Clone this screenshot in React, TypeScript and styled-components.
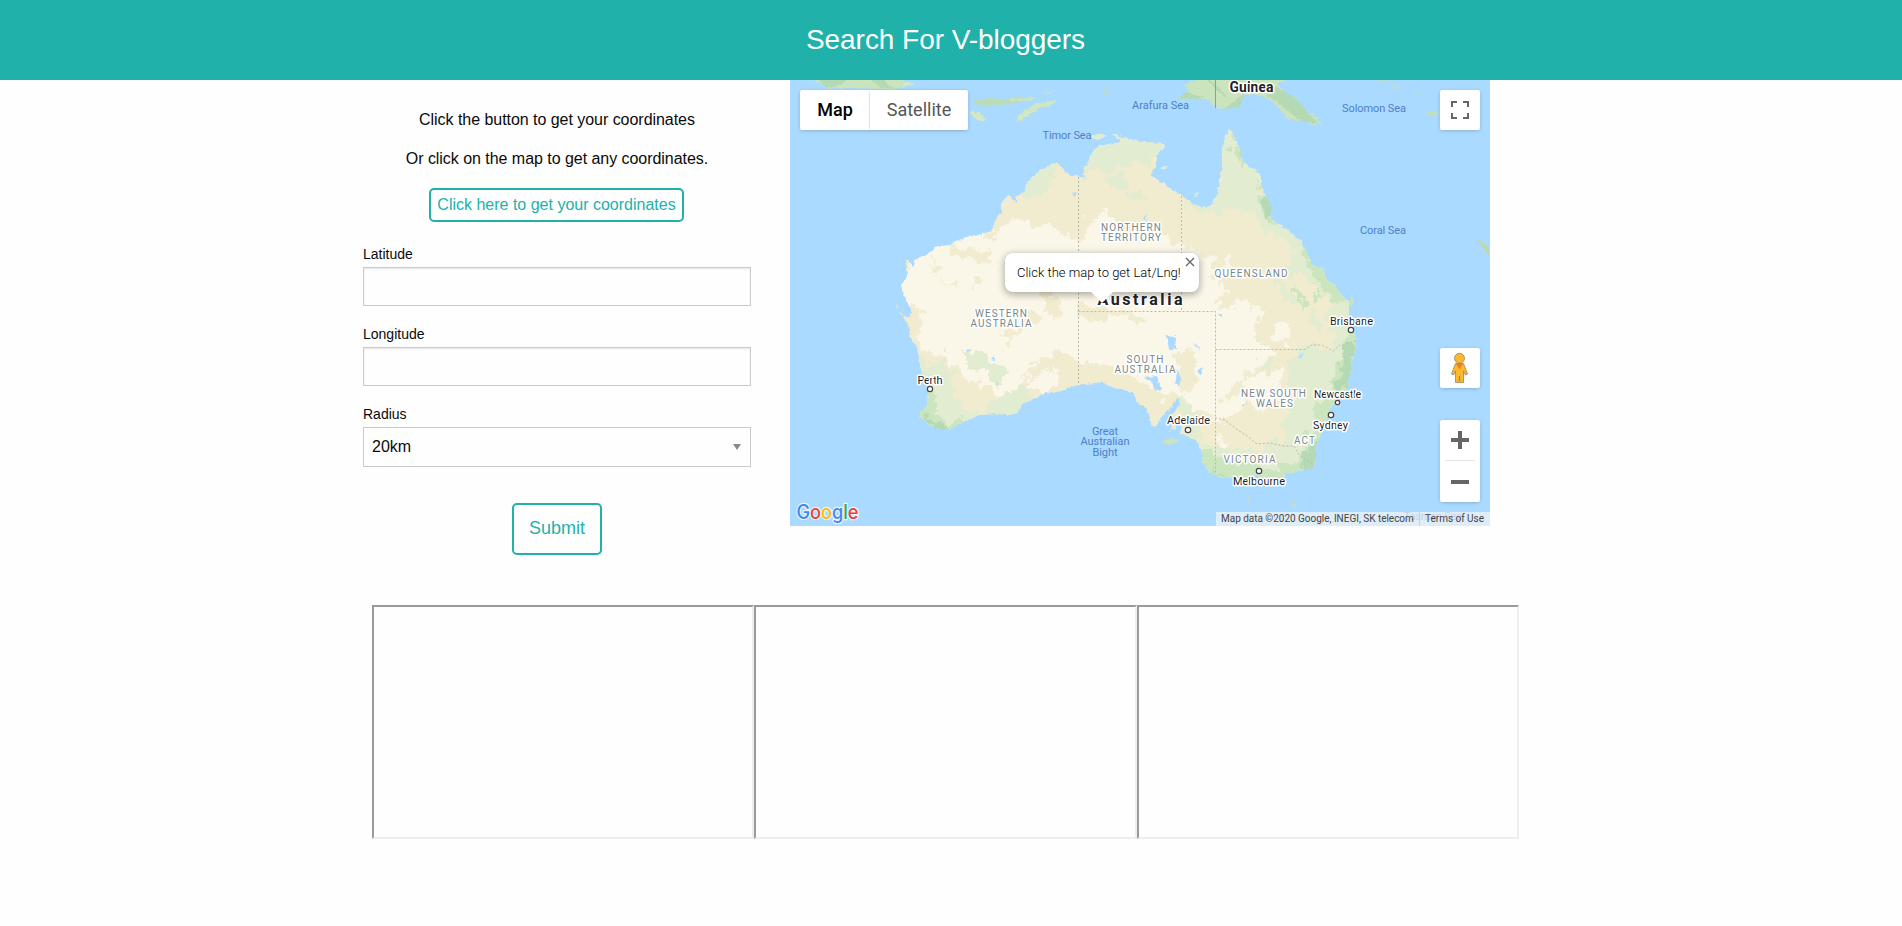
import React from "react";
import styled, { createGlobalStyle } from "styled-components";

const TEAL = "#20b2aa";

const GlobalStyle = createGlobalStyle`
  *, *::before, *::after { box-sizing: border-box; }
  body {
    margin: 0;
    background: #fefefe;
    color: #0a0a0a;
    font-family: "Liberation Sans", Arial, sans-serif;
    font-size: 16px;
  }
`;

const Header = styled.header`
  height: 80px;
  display: flex;
  align-items: center;
  justify-content: center;
  padding: 0 11px 2px 0;
  background: ${TEAL};
`;

const Title = styled.h1`
  margin: 0;
  color: #fefefe;
  font-size: 28px;
  font-weight: 400;
  line-height: 39px;
  letter-spacing: -0.05px;
  white-space: nowrap;
`;

const Main = styled.main`
  display: grid;
  grid-template-columns: 388px 700px;
  column-gap: 39px;
  align-items: start;
  padding-left: 363px;
`;

const Form = styled.form`
  display: flex;
  flex-direction: column;
  align-items: center;
  padding-top: 27px;
`;

const Hint = styled.p`
  margin: 0 0 13px;
  line-height: 26px;
  letter-spacing: -0.04px;
  white-space: nowrap;
`;

const OutlineButton = styled.button<{ $large?: boolean }>`
  width: ${(p) => (p.$large ? 90 : 255)}px;
  height: ${(p) => (p.$large ? 52 : 34)}px;
  margin-top: ${(p) => (p.$large ? 36 : 3)}px;
  margin-right: ${(p) => (p.$large ? 0 : 1)}px;
  padding: 0 0 1px;
  border: 2px solid ${TEAL};
  border-radius: 5px;
  background: #fefefe;
  color: ${TEAL};
  font: 400 ${(p) => (p.$large ? 18 : 16)}px "Liberation Sans", Arial, sans-serif;
  white-space: nowrap;
`;

const Fields = styled.div`
  width: 100%;
  display: grid;
  row-gap: 15px;
  margin-top: 20px;
`;

const Field = styled.label`
  display: flex;
  flex-direction: column;
  height: 65px;
  font-size: 14px;
  line-height: 25px;
`;

const Input = styled.input`
  width: 100%;
  height: 39px;
  padding: 8px;
  border: 1px solid #cacaca;
  border-radius: 0;
  background: #fefefe;
  box-shadow: inset 0 1px 2px rgba(10, 10, 10, 0.1);
  font: inherit;
`;

const Select = styled.div`
  height: 40px;
  flex: none;
  display: flex;
  align-items: center;
  justify-content: space-between;
  padding: 0 9px 2px 8px;
  border: 1px solid #cacaca;
  font-size: 16px;
`;

const Caret = styled.span`
  margin-top: 2px;
  border: 4px solid transparent;
  border-top: 6px solid #8a8a8a;
  border-bottom: 0;
`;

const MapPanel = styled.section`
  position: relative;
  width: 700px;
  height: 446px;
  overflow: hidden;
  background: #aadaff;
  font-family: Roboto, sans-serif;
`;

const MapSvg = styled.svg`
  display: block;
  width: 700px;
  height: 446px;
`;

const Control = styled.div<{ $top: number; $height?: number }>`
  position: absolute;
  right: 10px;
  top: ${(p) => p.$top}px;
  width: 40px;
  height: ${(p) => p.$height ?? 40}px;
  border-radius: 2px;
  background: #fff;
  box-shadow: 0 1px 4px -1px rgba(0, 0, 0, 0.3);
`;

const MapTypes = styled.div`
  position: absolute;
  left: 10px;
  top: 10px;
  display: flex;
  height: 40px;
  border-radius: 2px;
  background: #fff;
  box-shadow: 0 1px 4px -1px rgba(0, 0, 0, 0.3);
`;

const MapType = styled.span<{ $active?: boolean }>`
  width: ${(p) => (p.$active ? 70 : 98)}px;
  line-height: 40px;
  text-align: center;
  font-size: 18px;
  font-weight: ${(p) => (p.$active ? 500 : 400)};
  color: ${(p) => (p.$active ? "#000" : "#565656")};
  & + & { box-shadow: -1px 0 2px -1px rgba(0, 0, 0, 0.3); }
`;

const Bubble = styled.div`
  position: absolute;
  left: 215px;
  top: 173px;
  width: 194px;
  height: 39px;
  padding-left: 12px;
  border-radius: 8px;
  background: #fff;
  box-shadow: 0 2px 7px 1px rgba(0, 0, 0, 0.3);
  font-size: 13px;
  font-weight: 300;
  line-height: 40px;
  color: #000;
  white-space: nowrap;
  &::after {
    content: "";
    position: absolute;
    left: 85px;
    top: 38px;
    border: 12px solid transparent;
    border-top-color: #fff;
    border-bottom: 0;
  }
`;

const CloseIcon = styled.svg`
  position: absolute;
  right: 4px;
  top: 4px;
`;

const Attribution = styled.div`
  position: absolute;
  right: 0;
  bottom: 0;
  width: 274px;
  height: 14px;
  display: flex;
  justify-content: space-between;
  padding: 0 6px 0 5px;
  background: rgba(245, 245, 245, 0.7);
  color: #444;
  font-size: 10px;
  letter-spacing: -0.02px;
  line-height: 14px;
  white-space: nowrap;
`;

const Divider = styled.i`
  width: 1px;
  background: #aadaff;
`;

const Frames = styled.section`
  display: grid;
  grid-template-columns: repeat(3, 1fr);
  width: 1147px;
  margin: 50px 0 0 372px;
`;

const Frame = styled.div`
  height: 234px;
  border: 2px solid;
  border-color: #9a9a9a #eee #eee #9a9a9a;
`;

const MAINLAND =
  "M1009 195L1002 205 1002 213 997 220 992 232 980 236 966 238 962 241 955 242 950 246 938 247 927 256 918 259 913 267 909 261 907 270 908 277 903 285 903 292 906 299 912 311 911 318 904 318 909 325 911 337 917 348 920 357 921 368 927 383 929 393 928 407 922 412 920 418 927 423 935 429 950 431 960 425 972 420 980 416 997 415 1010 416 1018 414 1023 405 1047 394 1062 392 1078 386 1103 383 1115 389 1123 390 1135 395 1138 403 1145 407 1150 415 1153 428 1157 427 1163 417 1173 407 1179 398 1181 405 1173 417 1171 424 1176 431 1179 420 1182 426 1181 434 1188 437 1197 442 1203 452 1203 463 1210 473 1223 479 1233 479 1246 485 1252 478 1259 475 1262 481 1270 485 1275 489 1278 482 1288 474 1300 472 1313 470 1317 463 1317 447 1322 435 1328 420 1332 408 1340 400 1347 392 1351 378 1353 363 1357 347 1356 333 1350 317 1350 303 1344 298 1337 288 1326 278 1325 270 1313 266 1308 253 1302 242 1290 232 1280 225 1272 220 1272 207 1267 198 1262 185 1262 175 1253 169 1243 163 1242 152 1235 137 1230 129 1227 137 1223 150 1223 170 1220 187 1214 205 1207 209 1197 206 1180 195 1165 185 1152 176 1157 167 1157 157 1167 147 1160 144 1147 143 1133 141 1120 137 1113 134 1122 143 1110 145 1100 147 1093 153 1087 167 1083 175 1087 179 1078 176 1070 178 1069 174 1057 164 1043 170 1033 178 1027 185 1025 193 1017 198 1017 205Z";

const SAND = [
  "M990 190L1030 155 1080 130 1170 125 1178 190 1230 115 1275 210 1330 270 1365 340 1340 420 1300 460 1245 470 1225 450 1216 425 1240 410 1248 400 1232 395 1225 404 1222 396 1240 380 1258 368 1278 355 1262 348 1255 328 1262 315 1252 306 1240 300 1222 312 1218 300 1228 290 1216 285 1226 268 1208 280 1216 262 1200 252 1176 246 1168 236 1152 238 1120 240 1112 220 1104 208 1098 220 1090 222 1084 238 1072 240 1060 230 1040 228 1030 222 1018 218 1006 228 995 236 984 238Z",
  "M952 240L970 252 990 248 994 264 970 262 948 257Z",
  "M932 256L944 272 934 268Z",
  "M930 276L948 282 958 286 946 284Z M972 278L986 276 980 290Z",
  "M903 312L914 304 925 314 922 330 914 336 923 350 950 362 965 380 990 385 1005 405 1020 395 1026 378 1034 366 1060 352 1074 354 1080 362 1120 370 1132 380 1150 380 1165 400 1178 395 1192 410 1218 422 1222 480 900 440 890 330Z",
  "M1078 308L1096 304 1110 312 1130 312 1147 322 1140 328 1124 316 1100 322 1080 318Z",
  "M1040 285L1052 290 1062 310 1056 322 1046 308Z M1005 325L1022 332 1014 346 1002 340Z M1030 310L1040 318 1034 330 1024 322Z",
  "M1176 350L1194 345 1192 362 1198 385 1184 396 1180 376Z",
];

const LIGHT = [
  "M1028 378L1060 368 1062 384 1040 392 1026 390Z",
  "M1272 325L1294 325 1292 340 1282 346 1272 336Z",
  "M1248 380L1282 370 1285 400 1270 412 1256 408 1245 398Z",
  "M1224 262L1236 256 1232 272 1222 268Z",
];

const GREEN = [
  "M1057 160L1060 172 1046 190 1028 200 1020 186 1030 165Z",
  "M1082 180L1092 172 1106 172 1118 164 1126 172 1140 160 1150 166 1165 150 1160 128 1100 128 1080 160Z",
  "M1110 174L1126 176 1130 186 1120 190 1112 192Z M1130 190L1148 198 1140 204 1132 202Z",
  "M1225 115L1255 160 1270 190 1285 215 1300 235 1296 246 1276 234 1262 236 1262 222 1250 210 1238 214 1232 204 1215 218 1208 208 1222 180Z",
  "M1182 198L1212 208 1208 216 1190 208Z",
  "M1275 222L1325 255 1365 335 1355 385 1325 430 1320 480 1260 490 1200 478 1195 442 1215 448 1238 452 1262 448 1280 442 1286 418 1302 400 1290 384 1288 366 1300 350 1312 346 1330 352 1336 338 1326 316 1334 304 1318 296 1310 280 1298 272 1292 284 1286 270 1298 256 1288 242Z",
  "M1260 362L1278 358 1276 370 1264 374Z M1278 280L1290 292 1306 300 1298 306 1284 300Z M1314 308L1322 314 1320 334 1312 322Z",
  "M918 355L930 366 946 362 954 378 956 400 966 412 985 412 996 400 1010 395 1022 384 1034 400 1015 425 950 445 910 425Z",
  "M960 350L982 352 998 364 1010 374 1002 386 986 374 970 372Z",
  "M1178 398L1190 402 1200 420 1206 440 1183 438Z",
];

const FOREST = [
  "M930 388L938 396 938 414 948 424 964 422 958 436 920 432 916 414Z",
  "M1234 134L1246 160 1243 170 1236 156Z",
  "M1258 185L1278 205 1278 226 1264 216Z",
  "M1298 236L1322 262 1334 280 1350 300 1340 308 1326 294 1316 280 1306 262Z",
  "M1292 284L1302 290 1310 302 1304 306 1296 296Z M1314 286L1322 296 1318 304Z",
  "M1362 330L1362 350 1356 385 1338 404 1334 384 1342 360 1348 338Z",
  "M1336 398L1330 425 1320 448 1322 474 1266 494 1258 474 1288 464 1306 456 1308 440 1316 420 1318 404Z",
  "M1198 446L1212 452 1228 460 1262 466 1268 478 1250 488 1206 480Z",
];

const DARK_FOREST = [
  "M1343 344L1356 348 1352 384 1338 392 1344 370Z",
  "M928 420L946 424 955 432 934 434Z",
  "M1306 455L1320 446 1320 472 1300 470Z",
  "M1262 188L1274 205 1272 222 1266 214Z",
  "M1242 146L1248 164 1243 162Z",
  "M1214 466L1222 476 1216 480Z",
];

const LAKES =
  "M1168 336L1176 337 1177 349 1170 351Z M1145 379L1157 377 1162 390 1156 392 1153 383Z M1177 368L1182 378 1180 388 1176 383Z M1198 372L1203 368 1202 377Z M1195 344l6 5-1 3z M967 351l6-1-4 4z M992 360l4-4 0 5z M997 388l2-8-1 10z M945 352l2-4-1 5z M1144 220l4-5-1 6z M1219 314l4 0-2 4z M1299 360l6-7-2 5z M1242 407l6-4-3 4z M1074 195l4-3-2 6z";

const ISLANDS: [string, string][] = [
  ["M811 80L905 80 907 86 895 91 862 89 826 89 822 84Z", "#cbe4bd"],
  ["M820 80L850 80 842 86 826 89Z M872 80L884 80 894 90 880 88Z", "#b5d9b3"],
  ["M905 83L917 84 905 88Z", "#d6e8c5"],
  ["M974 102L990 99 1006 101 1020 97 1026 102 1003 106 981 107Z", "#bbdcb5"],
  ["M968 112L982 114 986 121 978 121Z", "#d4e8c4"],
  ["M1016 125L1020 116 1036 105 1058 101 1053 106 1038 110 1028 118 1017 123Z", "#d0e7c1"],
  ["M1010 100L1038 98 1030 102 1012 102Z", "#cbe4bd"],
  ["M1043 94l11-2-3 3z", "#cbe4bd"],
  ["M1104 94l6-8-2 8-4 2z", "#c0dfb7"],
  ["M1178 100L1190 93 1186 86 1197 80 1290 80 1278 84 1289 97 1296 99 1303 109 1317 118 1323 125 1315 127 1307 122 1289 120 1271 100 1255 95 1245 96 1240 109 1219 110 1208 100 1190 100Z", "#cbe4bd"],
  ["M1178 100L1188 92 1194 96 1206 98 1200 100Z M1278 88L1296 99 1317 122 1322 126 1300 121 1284 108 1268 96Z M1208 80L1216 84 1228 98 1218 92Z M1236 102L1246 94 1240 109 1224 110Z", "#b5d9b3"],
  ["M1092 137L1102 134 1107 137 1100 141 1094 140Z", "#e2ecd0"],
  ["M1163 168l5-1-1 3-4 0z M1194 197l5-3-2 4z", "#e2ecd0"],
  ["M1378 81l10 3-4-3z M1390 82l12 7-6-1z M1413 91l15 9-7-3z M1397 98l9 2-5 0z M1427 112l12 3-1 3-10-3z", "#c2dfb9"],
  ["M1477 240L1484 243 1490 249 1490 256 1482 247Z", "#b9dab1"],
  ["M1164 443L1172 439 1181 441 1175 444 1166 445Z", "#cce4bd"],
  ["M1168 432L1178 429 1176 425 1171 432Z", "#e8ecd0"],
  ["M1293 500l5 9-3 0z M1247 500l3-2 0 6z", "#c5e1ba"],
  ["M897 305l3 5-2-1z M901 311l5 7-4-2z M907 262l3-2 1 12-3-4z", "#f1ebce"],
  ["M1353 296l2 6-3 6-2-3z", "#cbe4bd"],
];

type Label = {
  text: string;
  x: number;
  y: number;
  kind: "sea" | "state" | "city" | "country";
  w: number;
  size?: number;
};

const LABELS: Label[] = [
  { text: "Timor Sea", x: 1067, y: 139, kind: "sea", w: 49 },
  { text: "Arafura Sea", x: 1160.5, y: 109, kind: "sea", w: 57 },
  { text: "Solomon Sea", x: 1374, y: 112, kind: "sea", w: 64 },
  { text: "Coral Sea", x: 1383, y: 234, kind: "sea", w: 46 },
  { text: "Tasman Sea", x: 1433, y: 520, kind: "sea", w: 58 },
  { text: "Great", x: 1105, y: 435, kind: "sea", w: 26 },
  { text: "Australian", x: 1105, y: 445, kind: "sea", w: 49 },
  { text: "Bight", x: 1105, y: 456, kind: "sea", w: 25 },
  { text: "NORTHERN", x: 1131, y: 231, kind: "state", w: 60 },
  { text: "TERRITORY", x: 1131, y: 240.5, kind: "state", w: 60 },
  { text: "QUEENSLAND", x: 1251, y: 277, kind: "state", w: 73 },
  { text: "WESTERN", x: 1001, y: 317, kind: "state", w: 52 },
  { text: "AUSTRALIA", x: 1001, y: 327, kind: "state", w: 61 },
  { text: "SOUTH", x: 1145, y: 363, kind: "state", w: 37 },
  { text: "AUSTRALIA", x: 1145, y: 373, kind: "state", w: 61 },
  { text: "NEW SOUTH", x: 1273.5, y: 397, kind: "state", w: 65 },
  { text: "WALES", x: 1274.5, y: 407, kind: "state", w: 37 },
  { text: "ACT", x: 1304.5, y: 444, kind: "state", w: 21 },
  { text: "VICTORIA", x: 1249.5, y: 463, kind: "state", w: 52 },
  { text: "Perth", x: 930, y: 384, kind: "city", w: 25 },
  { text: "Adelaide", x: 1188.5, y: 424, kind: "city", w: 43 },
  { text: "Melbourne", x: 1259, y: 485, kind: "city", w: 52 },
  { text: "Brisbane", x: 1351.5, y: 325, kind: "city", w: 43 },
  { text: "Newcastle", x: 1337.5, y: 398, kind: "city", w: 47, size: 10.5 },
  { text: "Sydney", x: 1330.5, y: 429, kind: "city", w: 35 },
  { text: "Guinea", x: 1251.5, y: 92, kind: "country", w: 44 },
  { text: "Australia", x: 1140, y: 304.5, kind: "country", w: 85, size: 16 },
];

const CITY_DOTS = [
  [930, 389, 2.6],
  [1188, 430, 2.7],
  [1259, 471, 2.7],
  [1351, 330, 2.7],
  [1337.5, 402.5, 2.2],
  [1331, 415, 2.7],
];

const LABEL_STYLE = {
  sea: { fontSize: 11, fill: "#4f7fc9", weight: 400, halo: "none" },
  state: { fontSize: 10, fill: "#76878a", weight: 400, halo: "#fff" },
  city: { fontSize: 11, fill: "#202124", weight: 400, halo: "#fff" },
  country: { fontSize: 14, fill: "#202124", weight: 700, halo: "#fff" },
};

function Patches({ shapes, color }: { shapes: string[]; color: string }) {
  return (
    <>
      {shapes.map((d) => (
        <path key={d} d={d} fill={color} />
      ))}
    </>
  );
}

function AustraliaMap() {
  return (
    <MapSvg viewBox="790 80 700 446" role="img" aria-label="Map of Australia">
      <defs>
        <clipPath id="land">
          <path d={MAINLAND} />
        </clipPath>
        <filter id="rough" x="-5%" y="-5%" width="110%" height="110%">
          <feTurbulence type="fractalNoise" baseFrequency="0.09" numOctaves="3" seed="4" />
          <feDisplacementMap in="SourceGraphic" scale="20" xChannelSelector="R" yChannelSelector="G" />
        </filter>
        <filter id="coast" x="-5%" y="-5%" width="110%" height="110%">
          <feTurbulence type="fractalNoise" baseFrequency="0.25" numOctaves="2" seed="2" />
          <feDisplacementMap in="SourceGraphic" scale="4" xChannelSelector="R" yChannelSelector="G" />
        </filter>
      </defs>
      <g filter="url(#coast)" transform="translate(-1 -1)">
        <g clipPath="url(#land)">
          <path d={MAINLAND} fill="#faf6e8" />
          <g filter="url(#rough)">
            <Patches shapes={SAND} color="#f1ebcf" />
            <Patches shapes={LIGHT} color="#faf6e8" />
            <Patches shapes={GREEN} color="#e2ecd0" />
            <Patches shapes={FOREST} color="#cbe5be" />
            <Patches shapes={DARK_FOREST} color="#b5d9b3" />
          </g>
        </g>
        {ISLANDS.map(([d, color]) => (
          <path key={d} d={d} fill={color} />
        ))}
        <path d={LAKES} fill="#aadaff" />
      </g>
      <g fill="none" stroke="#b9b9ac" strokeWidth="1" strokeDasharray="2 2">
        <path d="M1078.500 177V386M1181.500 196V311.500M1078.500 311.500H1215.500V474M1215.500 349.500H1305L1312 345 1322 345 1333 351 1340 345 1356 341" />
        <path d="M1215 418L1225 420 1235 428 1247 436 1257 444 1270 443 1284 446 1294 446 1300 456 1314 465" />
        <path d="M1215.500 80V108" stroke="#999" strokeDasharray="none" />
      </g>
      {LABELS.map((l) => {
        const s = LABEL_STYLE[l.kind];
        return (
          <text
            key={l.text + l.y}
            x={l.x - l.w / 2}
            y={l.y}
            textLength={l.w}
            fontSize={l.size ?? s.fontSize}
            fontWeight={s.weight}
            fill={s.fill}
            stroke={s.halo}
            strokeWidth="3"
            strokeLinejoin="round"
            paintOrder="stroke"
          >
            {l.text}
          </text>
        );
      })}
      {CITY_DOTS.map(([x, y, r]) => (
        <circle key={x} cx={x} cy={y} r={r} fill="#fff" stroke="#444" strokeWidth="1.2" />
      ))}
      <text
        x="796.5"
        y="519"
        textLength="62"
        lengthAdjust="spacingAndGlyphs"
        fontFamily="Inter, sans-serif"
        fontSize="20"
        fontWeight="500"
        stroke="#e9f4fd"
        strokeWidth="2.5"
        strokeLinejoin="round"
        paintOrder="stroke"
      >
        <tspan fill="#4285f4">G</tspan>
        <tspan fill="#ea4335">o</tspan>
        <tspan fill="#fbbc05">o</tspan>
        <tspan fill="#4285f4">g</tspan>
        <tspan fill="#34a853">l</tspan>
        <tspan fill="#ea4335">e</tspan>
      </text>
    </MapSvg>
  );
}

export default function App() {
  return (
    <>
      <GlobalStyle />
      <Header>
        <Title>Search For V-bloggers</Title>
      </Header>
      <Main>
        <Form>
          <Hint>Click the button to get your coordinates</Hint>
          <Hint>Or click on the map to get any coordinates.</Hint>
          <OutlineButton type="button">Click here to get your coordinates</OutlineButton>
          <Fields>
            <Field>
              Latitude
              <Input />
            </Field>
            <Field>
              Longitude
              <Input />
            </Field>
            <Field>
              Radius
              <Select>
                20km
                <Caret />
              </Select>
            </Field>
          </Fields>
          <OutlineButton type="button" $large>
            Submit
          </OutlineButton>
        </Form>
        <MapPanel>
          <AustraliaMap />
          <MapTypes>
            <MapType $active>Map</MapType>
            <MapType>Satellite</MapType>
          </MapTypes>
          <Bubble>
            Click the map to get Lat/Lng!
            <CloseIcon width="10" height="10" viewBox="0 0 10 10">
              <path d="M1 1l8 8M9 1l-8 8" stroke="#666" strokeWidth="1.3" />
            </CloseIcon>
          </Bubble>
          <Control $top={10}>
            <svg width="40" height="40" viewBox="0 0 40 40">
              <path d="M12 17V12H17M23 12H28V17M28 23V28H23M17 28H12V23" fill="none" stroke="#666" strokeWidth="2" />
            </svg>
          </Control>
          <Control $top={268}>
            <svg width="40" height="40" viewBox="0 0 40 40">
              <g fill="#fdb92b" stroke="#8a7a55" strokeWidth=".7">
                <path d="M15.5 15.5H23.5L27.5 26 25.5 27 23.5 23V34.5H20L19.5 28 19 34.5H15.5V23L13.5 27 11.5 26Z" />
                <circle cx="19.5" cy="10.3" r="5" />
              </g>
              <path d="M16 15.7H23L19.5 21.5Z" fill="#e8832d" />
            </svg>
          </Control>
          <Control $top={340} $height={82}>
            <svg width="40" height="82" viewBox="0 0 40 82">
              <path d="M11 20H29M20 11V29M11 62H29" stroke="#666" strokeWidth="4" />
              <path d="M5 40.5H35" stroke="#e6e6e6" />
            </svg>
          </Control>
          <Attribution>
            <span>Map data ©2020 Google, INEGI, SK telecom</span>
            <Divider />
            <span>Terms of Use</span>
          </Attribution>
        </MapPanel>
      </Main>
      <Frames>
        <Frame />
        <Frame />
        <Frame />
      </Frames>
    </>
  );
}
